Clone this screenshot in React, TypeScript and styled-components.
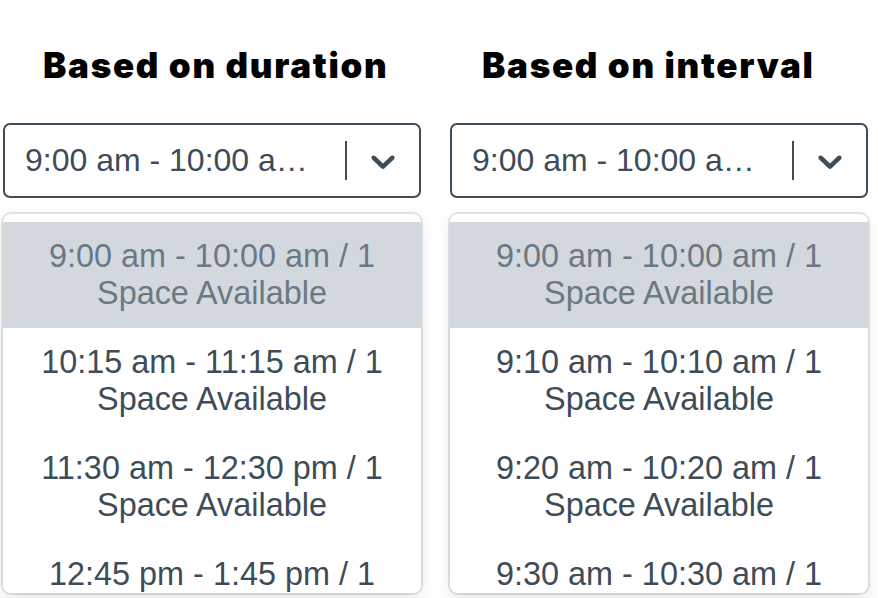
import React from "react";
import styled, { createGlobalStyle } from "styled-components";

const GlobalStyle = createGlobalStyle`
  html, body {
    margin: 0;
    padding: 0;
    background: #ffffff;
  }
  body {
    font-family: "Liberation Sans", Arial, sans-serif;
    overflow: hidden;
  }
`;

const Page = styled.div`
  display: flex;
  gap: 29px;
  padding-left: 3px;
  width: 878px;
  height: 598px;
  box-sizing: border-box;
  overflow: hidden;
`;

const Column = styled.section`
  display: flex;
  flex-direction: column;
  width: 418px;
`;

const Heading = styled.h2<{ $indent: number }>`
  margin: 0 0 38px 0;
  padding: 45px 0 0 ${(p) => p.$indent}px;
  font-family: Inter, "Liberation Sans", sans-serif;
  font-weight: 900;
  font-size: 35px;
  letter-spacing: 1.7px;
  line-height: 40px;
  color: #000000;
  white-space: nowrap;
`;

const Control = styled.div`
  display: flex;
  align-items: stretch;
  height: 75px;
  box-sizing: border-box;
  border: 2px solid #3e4c58;
  border-radius: 7px;
  background: #ffffff;
`;

const ValueContainer = styled.div`
  flex: 1;
  min-width: 0;
  display: flex;
  align-items: center;
  padding: 4px 16px;
`;

const SingleValue = styled.div`
  margin: 0 4px;
  font-size: 32px;
  color: #3e4c58;
  white-space: nowrap;
  overflow: hidden;
  text-overflow: ellipsis;
`;

const Indicators = styled.div`
  display: flex;
  align-items: center;
`;

const Separator = styled.span`
  align-self: stretch;
  width: 2px;
  margin: 16px 0;
  background: #3e4c58;
`;

const DropdownIndicator = styled.div`
  display: flex;
  padding: 16px;
  color: #3e4c58;
`;

const Menu = styled.div`
  margin-top: 16px;
  border-radius: 8px;
  background: #ffffff;
  box-shadow: 0 0 0 2px rgba(0, 0, 0, 0.1), 0 6px 16px rgba(0, 0, 0, 0.1);
  overflow: hidden;
`;

const MenuList = styled.div`
  max-height: 371px;
  padding-top: 8px;
  overflow-y: auto;
  scrollbar-width: none;
  &::-webkit-scrollbar {
    display: none;
  }
`;

const Option = styled.div<{ $selected?: boolean }>`
  padding: 16px 20px;
  text-align: center;
  font-size: 32.4px;
  line-height: 37px;
  color: ${(p) => (p.$selected ? "#6c7882" : "#3e4c58")};
  background: ${(p) => (p.$selected ? "#d3d8df" : "#ffffff")};
`;

const Chevron = () => (
  <svg width="40" height="40" viewBox="0 0 20 20" fill="currentColor" aria-hidden="true">
    <path d="M4.516 7.548c0.436-0.446 1.043-0.481 1.576 0l3.908 3.747 3.908-3.747c0.533-0.481 1.141-0.446 1.574 0 0.436 0.445 0.408 1.197 0 1.615-0.406 0.418-4.695 4.502-4.695 4.502-0.217 0.223-0.502 0.335-0.787 0.335s-0.57-0.112-0.789-0.335c0 0-4.287-4.084-4.695-4.502s-0.436-1.17 0-1.615z" />
  </svg>
);

type SlotSelectProps = {
  title: string;
  indent: number;
  slots: string[];
};

const SlotSelect = ({ title, indent, slots }: SlotSelectProps) => (
  <Column>
    <Heading $indent={indent}>{title}</Heading>
    <Control>
      <ValueContainer>
        <SingleValue>{slots[0]} / 1 Space Available</SingleValue>
      </ValueContainer>
      <Indicators>
        <Separator />
        <DropdownIndicator>
          <Chevron />
        </DropdownIndicator>
      </Indicators>
    </Control>
    <Menu>
      <MenuList>
        {slots.map((s, i) => (
          <Option key={s} $selected={i === 0}>
            {s} / 1 Space Available
          </Option>
        ))}
      </MenuList>
    </Menu>
  </Column>
);

const durationSlots = [
  "9:00 am - 10:00 am",
  "10:15 am - 11:15 am",
  "11:30 am - 12:30 pm",
  "12:45 pm - 1:45 pm",
];

const intervalSlots = [
  "9:00 am - 10:00 am",
  "9:10 am - 10:10 am",
  "9:20 am - 10:20 am",
  "9:30 am - 10:30 am",
];

export default function App() {
  return (
    <>
      <GlobalStyle />
      <Page>
        <SlotSelect title="Based on duration" indent={40} slots={durationSlots} />
        <SlotSelect title="Based on interval" indent={32} slots={intervalSlots} />
      </Page>
    </>
  );
}
